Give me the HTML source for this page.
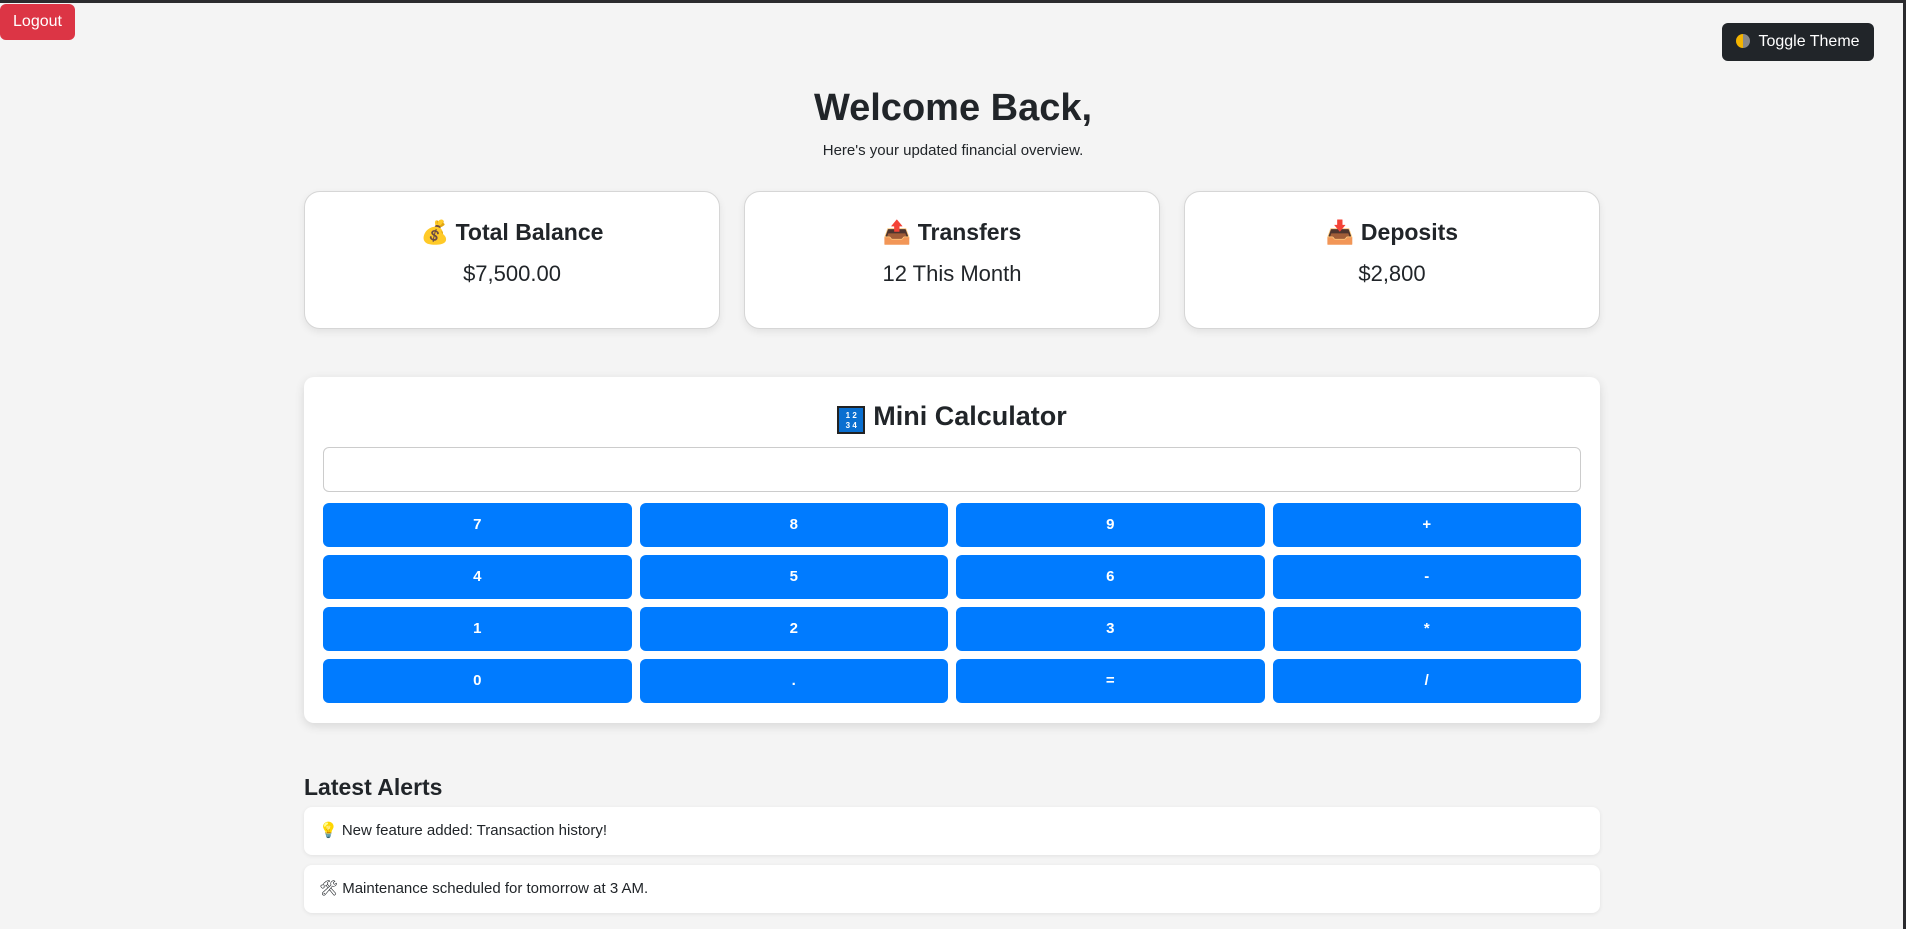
<!DOCTYPE html>
<html><head><meta charset="utf-8"><style>
*{box-sizing:border-box;margin:0;padding:0}
html,body{width:1906px;height:929px;overflow:hidden}
body{background:#f4f4f4;font-family:"Liberation Sans","DejaVu Sans",sans-serif;color:#212529;position:relative}
.frame{position:absolute;left:0;top:0;width:1906px;height:3px;background:#2b2b2e}
.frame2{position:absolute;right:0;top:0;width:3px;height:929px;background:#2b2b2e}
.logout{position:absolute;left:0;top:4px;width:75px;height:36px;background:#dc3545;color:#fff;border-radius:6px;font-size:16px;line-height:36px;text-align:center}
.toggle{position:absolute;left:1722px;top:23px;width:152px;height:38px;background:#212529;color:#fff;border-radius:6px;font-size:16px;line-height:38px;text-align:center}
.moon{display:inline-block;width:14px;height:14px;border-radius:50%;background:linear-gradient(90deg,#f4b400 50%,#888 50%);vertical-align:-2px;margin-right:8px}
h1{position:absolute;left:0;width:1906px;top:87px;text-align:center;font-size:38px;font-weight:bold}
.sub{position:absolute;left:0;width:1906px;top:142px;text-align:center;font-size:15px}
.card{position:absolute;top:191px;width:416px;height:138px;background:#fff;border:1px solid #d6d6d6;border-radius:16px;box-shadow:0 3px 8px rgba(0,0,0,.08);text-align:center}
.card h3{margin-top:27px;font-size:23px;font-weight:bold}
.card p{margin-top:15px;font-size:22px}
.calc{position:absolute;left:304px;top:377px;width:1296px;height:346px;background:#fff;border-radius:10px;box-shadow:0 3px 10px rgba(0,0,0,.12)}
.calc h2{text-align:center;font-size:27px;margin-top:24px;font-weight:bold}
.ic{display:inline-block;width:28px;height:28px;background:#0a6fd0;border:2px solid #222;color:#fff;font-size:8px;line-height:10px;vertical-align:-3px;margin-right:8px;padding-top:3px}
.inp{position:absolute;left:19px;top:70px;width:1258px;height:45px;border:1px solid #ccc;border-radius:6px}
.grid{position:absolute;left:19px;top:126px;width:1258px;display:grid;grid-template-columns:repeat(4,1fr);gap:8px 8px}
.grid div{background:#007bff;color:#fff;height:44px;line-height:44px;text-align:center;border-radius:6px;font-size:15px;font-weight:bold}
.ah{position:absolute;left:304px;top:774px;font-size:23px;font-weight:bold}
.al{position:absolute;left:304px;width:1296px;height:48px;background:#fff;border-radius:8px;box-shadow:0 1px 4px rgba(0,0,0,.08);font-size:15px;line-height:48px;padding-left:15px}
</style></head><body>
<div class="frame"></div><div class="frame2"></div>
<div class="logout">Logout</div>
<div class="toggle"><span class="moon"></span>Toggle Theme</div>
<h1>Welcome Back,</h1>
<div class="sub">Here's your updated financial overview.</div>
<div class="card" style="left:304px"><h3>💰 Total Balance</h3><p>$7,500.00</p></div>
<div class="card" style="left:744px"><h3>📤 Transfers</h3><p>12 This Month</p></div>
<div class="card" style="left:1184px"><h3>📥 Deposits</h3><p>$2,800</p></div>
<div class="calc"><h2><span class="ic">1 2<br>3 4</span>Mini Calculator</h2>
<div class="inp"></div>
<div class="grid"><div>7</div><div>8</div><div>9</div><div>+</div><div>4</div><div>5</div><div>6</div><div>-</div><div>1</div><div>2</div><div>3</div><div>*</div><div>0</div><div>.</div><div>=</div><div>/</div></div></div>
<div class="ah">Latest Alerts</div>
<div class="al" style="top:807px">💡 New feature added: Transaction history!</div>
<div class="al" style="top:865px">🛠 Maintenance scheduled for tomorrow at 3 AM.</div>
</body></html>
